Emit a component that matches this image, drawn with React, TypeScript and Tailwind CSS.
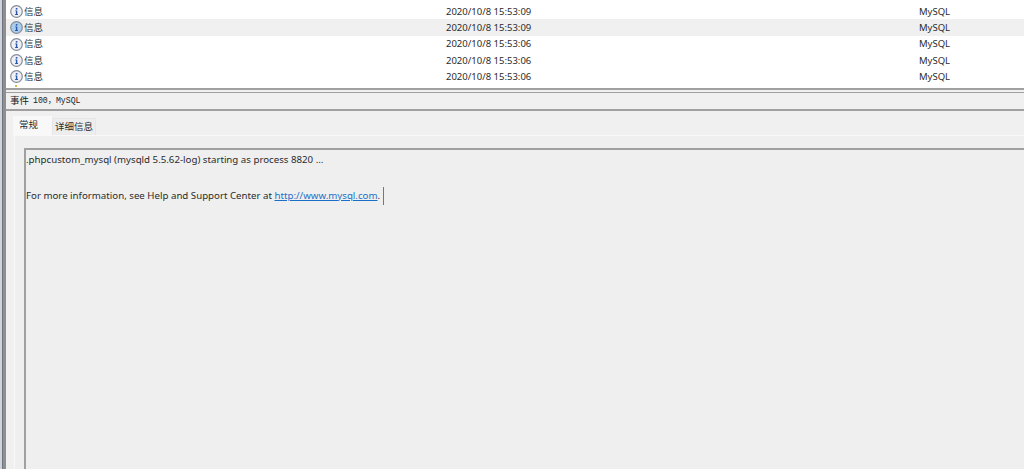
const rows = [
  { time: "2020/10/8 15:53:09", active: false },
  { time: "2020/10/8 15:53:09", active: true },
  { time: "2020/10/8 15:53:06", active: false },
  { time: "2020/10/8 15:53:06", active: false },
  { time: "2020/10/8 15:53:06", active: false },
];

function InfoIcon({ active }: { active: boolean }) {
  return (
    <svg width="13" height="13" viewBox="0 0 13 13" className="shrink-0">
      <circle cx="6.5" cy="6.5" r="5.8" fill={active ? "#a9cdec" : "#eef0f3"} stroke="#858c99" strokeWidth="1.2" />
      <path d="M5.2 5.4h2.1v3.7h.7v.8H5.1v-.8h.8V6.2h-.7z" fill="#2a55a8" />
      <rect x="5.8" y="3" width="1.6" height="1.6" fill="#2a55a8" />
    </svg>
  );
}

export default function App() {
  return (
    <div className="w-[1024px] h-[469px] overflow-hidden bg-white flex text-[#2b2b2b] font-['Noto_Sans','Noto_Sans_CJK_SC',sans-serif]">
      {/* window edge */}
      <div className="w-[6px] shrink-0 flex">
        <div className="w-[3px] bg-[#cfd3da] border-r border-[#6f7480]" />
        <div className="w-[3px] bg-[#8f8f8f]" />
      </div>

      <div className="flex-1 flex flex-col min-w-0">
        {/* event list */}
        <div className="h-[88px] shrink-0 pt-[3px] bg-white overflow-hidden">
          {rows.map((row, i) => (
            <div key={i} className={`h-[16.25px] flex items-center pt-px text-[9.5px] leading-none ${row.active ? "bg-[#f0f0f0]" : ""}`}>
              <div className="w-[440px] flex items-center gap-[1px] pl-[4px]">
                <InfoIcon active={row.active} />
                <span className="font-['Noto_Sans_CJK_SC',sans-serif]">信息</span>
              </div>
              <div className="w-[473px]">{row.time}</div>
              <div>MySQL</div>
            </div>
          ))}
          {/* top of the next row's warning icon */}
          <div className="pl-[9px] pt-px">
            <div className="w-[2px] h-[2px] bg-[#e2b44c]" />
          </div>
        </div>

        <div className="h-[2px] shrink-0 bg-[#a0a0a0]" />
        <div className="h-[2px] shrink-0 bg-[#f0f0f0]" />

        {/* event header */}
        <div className="h-[19px] shrink-0 flex items-center pl-[4px] bg-[#f0f0f0] border-t border-b-2 border-[#a0a0a0] text-[9px] leading-none text-[#222]">
          <span className="font-['Noto_Sans_CJK_SC',sans-serif] text-[9.5px] mr-[4px]">事件</span>
          <span className="font-['Liberation_Mono','Noto_Sans_CJK_SC',monospace] text-[8.2px]">100，MySQL</span>
        </div>

        {/* tabs */}
        <div className="h-[24px] shrink-0 flex items-end pl-[7px] bg-[#f0f0f0] text-[9.5px] leading-none font-['Noto_Sans_CJK_SC',sans-serif]">
          <div className="w-[39px] h-[19px] bg-[#f8f8f8] flex items-center justify-start pl-[6px] pb-[2px]">常规</div>
          <div className="w-[44px] h-[17px] bg-[#ededed] border border-b-0 border-[#e6e6e6] flex items-center justify-center">详细信息</div>
        </div>

        {/* detail */}
        <div className="flex-1 min-h-0 bg-[#f0f0f0] pl-[8px]">
          <div className="h-full bg-[#efefef] border-t border-l border-[#f8f8f8] pl-[9px] pt-[12px]">
            <div className="h-full border-t-2 border-l-2 border-[#a0a0a0] pt-px text-[9.7px] leading-[18px]">
              <p>.phpcustom_mysql (mysqld 5.5.62-log) starting as process 8820 ...</p>
              <p className="mt-[18px]">
                For more information, see Help and Support Center at <span className="text-[#1a6fc9] underline">http://www.mysql.com</span>.
                <span className="inline-block align-middle ml-[3px] w-px h-[18px] bg-[#777]" />
              </p>
            </div>
          </div>
        </div>
      </div>
    </div>
  );
}
